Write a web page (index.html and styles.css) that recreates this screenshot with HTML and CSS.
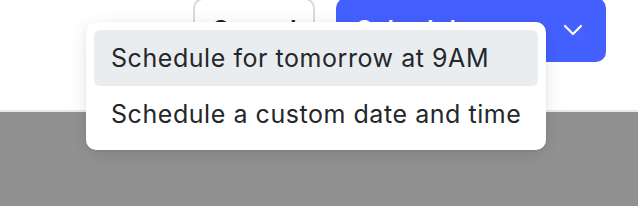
FILE: index.html
```html
<!DOCTYPE html>
<html>
<head>
<meta charset="utf-8">
<link rel="stylesheet" href="styles.css">
</head>
<body>
<div class="page">
  <header class="toolbar">
    <button class="btn btn-cancel">Cancel</button>
    <button class="btn btn-primary">
      <span class="btn-label">Schedule</span>
      <svg class="chevron" width="20" height="12" viewBox="0 0 20 12" aria-hidden="true">
        <path d="M2 2 L10 10 L18 2" fill="none" stroke="#ffffff" stroke-width="2.2" stroke-linecap="round" stroke-linejoin="round"/>
      </svg>
    </button>
  </header>
  <div class="backdrop"></div>
  <ul class="menu">
    <li class="menu-item active">Schedule for tomorrow at 9AM</li>
    <li class="menu-item">Schedule a custom date and time</li>
  </ul>
</div>
</body>
</html>
```
FILE: styles.css
```css
* { box-sizing: border-box; }
html, body { margin: 0; padding: 0; }
body {
  width: 638px;
  height: 206px;
  overflow: hidden;
  font-family: Inter, "Noto Sans", sans-serif;
  background: #919191;
}
.page {
  position: relative;
  height: 206px;
  display: flex;
  flex-direction: column;
}
.toolbar {
  height: 112px;
  background: #ffffff;
  border-bottom: 2px solid #e6e8eb;
  display: flex;
  justify-content: flex-end;
  align-items: flex-start;
  gap: 21px;
  padding-right: 32px;
}
.btn {
  margin-top: -2px;
  height: 64px;
  border-radius: 10px;
  font-family: inherit;
  font-size: 25px;
  font-weight: 600;
  letter-spacing: 0.3px;
  display: flex;
  align-items: center;
  padding: 0 20px;
}
.btn-cancel {
  width: 122px;
  background: #ffffff;
  border: 2px solid #d6d9de;
  color: #1f2328;
  justify-content: center;
}
.btn-primary {
  width: 270px;
  background: #4460ff;
  border: none;
  color: #ffffff;
  justify-content: space-between;
  padding-right: 23px;
}
.chevron { display: block; }
.backdrop { flex: 1; }
.menu {
  position: absolute;
  left: 86px;
  top: 22px;
  width: 460px;
  margin: 0;
  padding: 8px;
  list-style: none;
  background: #ffffff;
  border-radius: 10px;
  box-shadow: 0 4px 18px rgba(0, 0, 0, 0.10), 0 1px 3px rgba(0, 0, 0, 0.06);
}
.menu-item {
  height: 56px;
  display: flex;
  align-items: center;
  padding: 0 17px;
  font-size: 25px;
  letter-spacing: 0.55px;
  color: #24272c;
  border-radius: 6px;
  white-space: nowrap;
}
.menu-item.active { background: #eaedf0; }
```
